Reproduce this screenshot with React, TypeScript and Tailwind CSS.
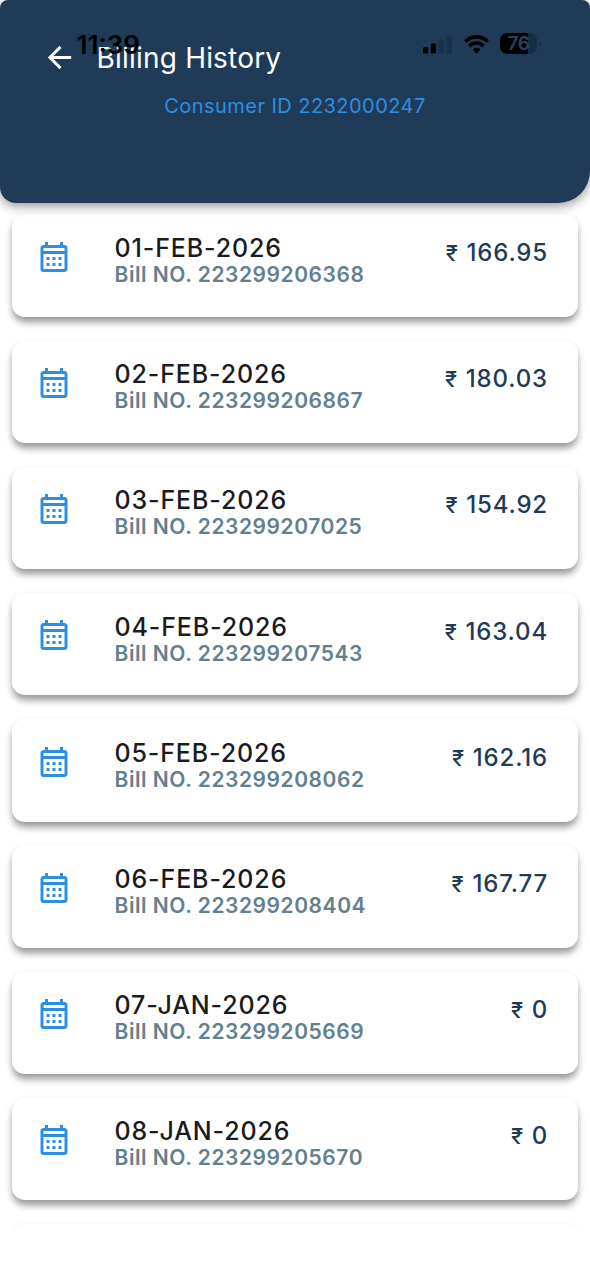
import { MdArrowBack, MdOutlineCalendarMonth } from 'react-icons/md';

interface Bill {
  date: string;
  billNo: string;
  amount: string;
}

const bills: Bill[] = [
  { date: '01-FEB-2026', billNo: '223299206368', amount: '166.95' },
  { date: '02-FEB-2026', billNo: '223299206867', amount: '180.03' },
  { date: '03-FEB-2026', billNo: '223299207025', amount: '154.92' },
  { date: '04-FEB-2026', billNo: '223299207543', amount: '163.04' },
  { date: '05-FEB-2026', billNo: '223299208062', amount: '162.16' },
  { date: '06-FEB-2026', billNo: '223299208404', amount: '167.77' },
  { date: '07-JAN-2026', billNo: '223299205669', amount: '0' },
  { date: '08-JAN-2026', billNo: '223299205670', amount: '0' },
];

function StatusBar() {
  return (
    <div className="absolute inset-x-0 top-0 flex items-start justify-between pl-[76.5px] pr-[49px] pt-[33px] text-black">
      <span className="text-[26px] font-semibold leading-[24px]">11:39</span>
      <div className="flex items-center gap-[11px]">
        <svg width="30" height="20" viewBox="0 0 30 20">
          <rect x="0" y="13" width="5.3" height="6.5" rx="1.5" fill="#000" />
          <rect x="7.8" y="9.5" width="5.3" height="10" rx="1.5" fill="#000" />
          <rect x="15.8" y="5.5" width="5.3" height="14" rx="1.5" fill="#19324b" />
          <rect x="23.8" y="1" width="5.3" height="18.5" rx="1.5" fill="#19324b" />
        </svg>
        <svg width="25" height="20" viewBox="0 0 25 20" fill="none" stroke="#000" strokeWidth="3.6">
          <path d="M1.4 7.5a15.7 15.7 0 0 1 22.2 0" />
          <path d="M5.4 12a10 10 0 0 1 14.2 0" />
          <path d="M12.5 19.5l-4-4.1a5.8 5.8 0 0 1 8 0z" fill="#000" stroke="none" />
        </svg>
        <div className="flex items-center gap-[2px]">
          <div className="flex h-[21px] w-[37px] items-center justify-center rounded-[7px] bg-[linear-gradient(to_right,#000_76%,#152d45_76%)]">
            <span className="text-[19px] font-semibold leading-none tracking-[-0.5px] text-[#29435c]">76</span>
          </div>
          <div className="h-[6px] w-[2px] rounded-r-full bg-[#172f46]" />
        </div>
      </div>
    </div>
  );
}

function BillCard({ bill }: { bill: Bill }) {
  return (
    <div className="flex h-[102.5px] shrink-0 items-start rounded-[13px] bg-white pl-[24px] pr-[30px] shadow-[0_6px_7px_-1px_rgba(0,0,0,0.32),0_4px_9px_rgba(0,0,0,0.14)]">
      <MdOutlineCalendarMonth className="mt-[24.5px] size-[36px] text-[#2c8fe0]" />
      <div className="ml-[42.5px] mt-[18.7px] flex-1">
        <div className="text-[25px] font-medium leading-[30px] tracking-[0.87px] text-[#1b1b1d]">{bill.date}</div>
        <div className="text-[21px] font-semibold leading-[24px] tracking-[0.55px] text-[#64808f]">
          Bill NO. {bill.billNo}
        </div>
      </div>
      <div className="mt-[24.7px] text-[24px] font-medium leading-[28px] tracking-[0.85px] text-[#1f3b58]">
        <span className="text-[22px] tracking-[1.4px]">₹</span> {bill.amount}
      </div>
    </div>
  );
}

export default function App() {
  return (
    <div className="flex h-[1280px] w-[590px] flex-col overflow-hidden bg-white font-['Inter',sans-serif]">
      <header className="relative z-10 h-[203px] shrink-0 rounded-t-[8px] rounded-bl-[16px] rounded-br-[32px] bg-[#1f3b58] shadow-[0_3px_11px_rgba(0,0,0,0.42)]">
        <div className="flex items-center pl-[42px] pt-[39px] text-white">
          <MdArrowBack className="size-[35px]" />
          <h1 className="ml-[19.5px] mt-[1px] text-[28px] font-normal leading-[36px] tracking-[0.2px]">Billing History</h1>
        </div>
        <p className="mt-[17px] text-center text-[20px] leading-[26px] tracking-[0.45px] text-[#2e8de0]">
          Consumer ID 2232000247
        </p>
        <StatusBar />
      </header>

      {/* the list is cut off above the bottom safe area */}
      <main className="flex h-[1025px] shrink-0 flex-col gap-[23.7px] overflow-hidden px-[12px] pt-[11.4px]">
        {bills.map((bill) => (
          <BillCard key={bill.billNo} bill={bill} />
        ))}
        <div className="h-[102.5px] shrink-0 rounded-[13px] bg-white shadow-[0_6px_7px_-1px_rgba(0,0,0,0.32),0_4px_9px_rgba(0,0,0,0.14)]" />
      </main>
    </div>
  );
}
